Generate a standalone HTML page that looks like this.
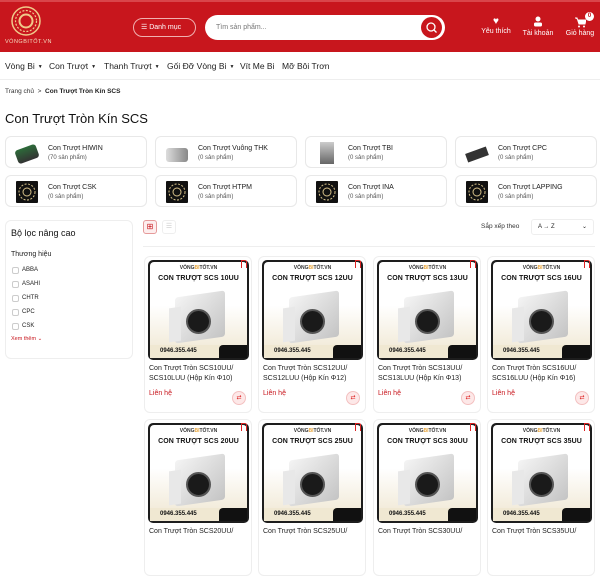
<!DOCTYPE html>
<html><head><meta charset="utf-8">
<style>
*{box-sizing:border-box;margin:0;padding:0}
body{width:600px;height:535px;overflow:hidden;background:#fff;font-family:"Liberation Sans",Arial,sans-serif;color:#222;position:relative}
.a{position:absolute}
.hdr{left:0;top:0;width:600px;height:52px;background:#c8161d;border-top:2px solid #d9454a}
.ico{color:#fff;font-size:7px;text-align:center;width:44px}
.nav{top:52px;left:0;width:600px;height:28px;border-bottom:1px solid #eee;font-size:8.5px;color:#222}
.nav>span{position:absolute;top:9px;white-space:nowrap}
.tri{font-size:5px;margin-left:3px;vertical-align:1px}
.cat{border:1px solid #e8e8e8;border-radius:6px;height:32px;width:142px;background:#fff}
.cat .t{position:absolute;left:42px;top:8px;font-size:7px;color:#222}
.cat .s{position:absolute;left:42px;top:18px;font-size:6px;color:#555}
.cat .im{position:absolute;left:10px;top:5px;width:22px;height:22px}
.bim{background:#111;border-radius:1px}
.side{left:5px;top:220px;width:128px;height:139px;border:1px solid #eee;border-radius:6px}
.cb{position:absolute;left:6px;width:7px;height:7px;border:1px solid #ccc;border-radius:2px}
.cbl{position:absolute;left:16px;font-size:6px;color:#222}
.card{width:108px;height:157px;border:1px solid #eee;border-radius:6px;background:#fff}
.img{position:absolute;left:3px;top:3px;width:101px;height:100px;border-radius:5px;background:#1d1d1d;overflow:hidden}
.in{position:absolute;left:2px;top:2px;right:2px;bottom:2px;border-radius:4px;background:linear-gradient(#fff 0%,#fff 45%,#efe6d0 100%)}
.br{position:absolute;top:3px;width:100%;text-align:center;font-size:5px;font-weight:bold;color:#333}
.br b{color:#e8a53a}
.tt{position:absolute;top:13px;width:100%;text-align:center;font-size:7px;font-weight:bold;color:#111;letter-spacing:.1px}
.blk{position:absolute;left:25px;top:32px;width:50px;height:46px;background:linear-gradient(135deg,#f4f4f4,#c4c4c4);border-radius:3px;transform:skewY(-8deg)}
.blk:before{content:"";position:absolute;left:-6px;top:10px;width:12px;height:34px;background:#e8e8e8}
.bear{position:absolute;left:36px;top:47px;width:25px;height:25px;border-radius:50%;background:#1a1a1a;border:2px solid #555}
.ph{position:absolute;left:0;bottom:0;width:100%;height:13px;background:#f0e8d2}
.ph span{position:absolute;left:10px;top:3px;font-size:6px;font-weight:bold;color:#111}
.ph i{position:absolute;right:0;top:0;width:28px;height:13px;background:#111;border-radius:4px 0 0 0}
.bm{position:absolute;right:2px;top:0;width:6px;height:8px;border:1.5px solid #d22;border-bottom:none}
.nm{position:absolute;left:4px;top:107px;font-size:7px;line-height:10px;color:#222;width:100px}
.pr{position:absolute;left:4px;top:133px;font-size:7px;color:#c8161d}
.cmp{position:absolute;right:5px;top:134px;width:14px;height:14px;border-radius:50%;background:#fde8e8;border:1px solid #f3c0c0;color:#d22;font-size:6px;text-align:center;line-height:12px}
</style></head><body>
<div class="a hdr">
  <svg class="a" style="left:11px;top:4px" width="30" height="31" viewBox="0 0 30 31"><circle cx="15" cy="15" r="14" fill="none" stroke="#f0c98a" stroke-width="1.5"/><circle cx="15" cy="15" r="10.5" fill="none" stroke="#f0c98a" stroke-width="1.2" stroke-dasharray="2 1.5"/><circle cx="15" cy="15" r="6.5" fill="none" stroke="#f0c98a" stroke-width="2"/></svg>
  <div class="a" style="left:5px;top:37px;font-size:5.5px;color:#f5dcc0;letter-spacing:.5px">VÒNGBITỐT.VN</div>
  <div class="a" style="left:133px;top:16px;width:63px;height:19px;border:1px solid #f0b0b0;border-radius:10px;color:#fff;font-size:7px;line-height:17px;padding-left:7px">☰ Danh mục</div>
  <div class="a" style="left:205px;top:13px;width:240px;height:25px;background:#fff;border-radius:13px;font-size:7px;color:#777;line-height:25px;padding-left:11px">Tìm sản phẩm...</div>
  <div class="a" style="left:421px;top:15px;width:21px;height:21px;border-radius:50%;background:#c8161d"><svg width="21" height="21"><circle cx="10" cy="10" r="4" fill="none" stroke="#fff" stroke-width="1.3"/><path d="M13 13l2.5 2.5" stroke="#fff" stroke-width="1.3"/></svg></div>
  <div class="a ico" style="left:474px;top:14px"><div style="font-size:10px;line-height:12px">♥</div>Yêu thích</div>
  <div class="a ico" style="left:516px;top:14px"><svg width="10" height="12"><circle cx="5" cy="3" r="2.5" fill="#fff"/><rect x="1" y="6.5" width="8" height="4" rx="1.5" fill="#fff"/></svg><br>Tài khoản</div>
  <div class="a ico" style="left:558px;top:14px"><svg width="12" height="12"><path d="M1 2h2l2 6h6l1-4H4" fill="#fff" stroke="#fff"/><circle cx="5" cy="10.5" r="1" fill="#fff"/><circle cx="10" cy="10.5" r="1" fill="#fff"/></svg><br>Giỏ hàng</div>
  <div class="a" style="left:585px;top:10px;width:9px;height:9px;border-radius:50%;background:#fff;color:#c8161d;font-size:6px;font-weight:bold;text-align:center;line-height:9px">0</div>
</div>
<div class="a nav">
  <span style="left:5px">Vòng Bi<span class="tri">▼</span></span>
  <span style="left:49px">Con Trượt<span class="tri">▼</span></span>
  <span style="left:104px">Thanh Trượt<span class="tri">▼</span></span>
  <span style="left:167px">Gối Đỡ Vòng Bi<span class="tri">▼</span></span>
  <span style="left:240px">Vít Me Bi</span>
  <span style="left:282px">Mỡ Bôi Trơn</span>
</div>
<div class="a" style="left:5px;top:88px;font-size:6.5px;color:#333">Trang chủ &nbsp;&gt;&nbsp; <b style="color:#222">Con Trượt Tròn Kín SCS</b></div>
<div class="a" style="left:5px;top:111px;font-size:13px;color:#111">Con Trượt Tròn Kín SCS</div>

<div class="a cat" style="left:5px;top:136px"><div class="im" style="background:linear-gradient(#2d6b3a,#333);border-radius:3px;transform:rotate(-20deg);height:14px;top:10px"></div><div class="t">Con Trượt HIWIN</div><div class="s">(70 sản phẩm)</div></div>
<div class="a cat" style="left:155px;top:136px"><div class="im" style="background:linear-gradient(90deg,#ddd,#888);border-radius:3px;height:14px;top:11px"></div><div class="t">Con Trượt Vuông THK</div><div class="s">(0 sản phẩm)</div></div>
<div class="a cat" style="left:305px;top:136px"><div class="im" style="background:linear-gradient(#ccc,#666);width:14px;left:14px"></div><div class="t">Con Trượt TBI</div><div class="s">(0 sản phẩm)</div></div>
<div class="a cat" style="left:455px;top:136px"><div class="im" style="background:#333;height:9px;top:13px;transform:rotate(-20deg)"></div><div class="t">Con Trượt CPC</div><div class="s">(0 sản phẩm)</div></div>
<div class="a cat" style="left:5px;top:175px"><div class="im bim"><svg width="22" height="22"><circle cx="11" cy="11" r="8" fill="none" stroke="#d8c28a" stroke-dasharray="2 1.5"/><circle cx="11" cy="11" r="4" fill="none" stroke="#d8c28a"/></svg></div><div class="t">Con Trượt CSK</div><div class="s">(0 sản phẩm)</div></div>
<div class="a cat" style="left:155px;top:175px"><div class="im bim"><svg width="22" height="22"><circle cx="11" cy="11" r="8" fill="none" stroke="#d8c28a" stroke-dasharray="2 1.5"/><circle cx="11" cy="11" r="4" fill="none" stroke="#d8c28a"/></svg></div><div class="t">Con Trượt HTPM</div><div class="s">(0 sản phẩm)</div></div>
<div class="a cat" style="left:305px;top:175px"><div class="im bim"><svg width="22" height="22"><circle cx="11" cy="11" r="8" fill="none" stroke="#d8c28a" stroke-dasharray="2 1.5"/><circle cx="11" cy="11" r="4" fill="none" stroke="#d8c28a"/></svg></div><div class="t">Con Trượt INA</div><div class="s">(0 sản phẩm)</div></div>
<div class="a cat" style="left:455px;top:175px"><div class="im bim"><svg width="22" height="22"><circle cx="11" cy="11" r="8" fill="none" stroke="#d8c28a" stroke-dasharray="2 1.5"/><circle cx="11" cy="11" r="4" fill="none" stroke="#d8c28a"/></svg></div><div class="t">Con Trượt LAPPING</div><div class="s">(0 sản phẩm)</div></div>

<div class="a side">
  <div class="a" style="left:5px;top:7px;font-size:9px;color:#111">Bộ lọc nâng cao</div>
  <div class="a" style="left:5px;top:30px;font-size:7px;color:#222">Thương hiệu</div>
  <div class="cb" style="top:46px"></div><div class="cbl" style="top:46px">ABBA</div>
  <div class="cb" style="top:60px"></div><div class="cbl" style="top:60px">ASAHI</div>
  <div class="cb" style="top:74px"></div><div class="cbl" style="top:74px">CHTR</div>
  <div class="cb" style="top:88px"></div><div class="cbl" style="top:88px">CPC</div>
  <div class="cb" style="top:102px"></div><div class="cbl" style="top:102px">CSK</div>
  <div class="a" style="left:5px;top:115px;font-size:5.5px;color:#c8161d">Xem thêm ⌄</div>
</div>

<div class="a" style="left:143px;top:220px;width:14px;height:14px;border:1px solid #e59a9a;border-radius:3px;background:#fdeeee;color:#c8161d;font-size:8px;text-align:center;line-height:12px">⊞</div>
<div class="a" style="left:162px;top:220px;width:14px;height:14px;border:1px solid #eee;border-radius:3px;color:#ccc;font-size:7px;text-align:center;line-height:12px">☰</div>
<div class="a" style="left:481px;top:223px;font-size:6.5px;color:#333">Sắp xếp theo</div>
<div class="a" style="left:531px;top:219px;width:63px;height:16px;border:1px solid #eee;border-radius:3px;font-size:6px;line-height:14px;padding-left:6px">A → Z<span style="position:absolute;right:6px">⌄</span></div>
<div class="a" style="left:143px;top:246px;width:452px;height:1px;background:#eee"></div>

<!-- row 1 -->
<div class="a card" style="left:144px;top:256px"><div class="img"><div class="in"><div class="br">VÒNG<b>BI</b>TỐT.VN</div><div class="tt">CON TRƯỢT SCS 10UU</div><div class="blk"></div><div class="bear"></div><div class="ph"><span>0946.355.445</span><i></i></div></div><div class="bm"></div></div><div class="nm">Con Trượt Tròn SCS10UU/ SCS10LUU (Hộp Kín Φ10)</div><div class="pr">Liên hệ</div><div class="cmp">⇄</div></div>
<div class="a card" style="left:258px;top:256px"><div class="img"><div class="in"><div class="br">VÒNG<b>BI</b>TỐT.VN</div><div class="tt">CON TRƯỢT SCS 12UU</div><div class="blk"></div><div class="bear"></div><div class="ph"><span>0946.355.445</span><i></i></div></div><div class="bm"></div></div><div class="nm">Con Trượt Tròn SCS12UU/ SCS12LUU (Hộp Kín Φ12)</div><div class="pr">Liên hệ</div><div class="cmp">⇄</div></div>
<div class="a card" style="left:373px;top:256px"><div class="img"><div class="in"><div class="br">VÒNG<b>BI</b>TỐT.VN</div><div class="tt">CON TRƯỢT SCS 13UU</div><div class="blk"></div><div class="bear"></div><div class="ph"><span>0946.355.445</span><i></i></div></div><div class="bm"></div></div><div class="nm">Con Trượt Tròn SCS13UU/ SCS13LUU (Hộp Kín Φ13)</div><div class="pr">Liên hệ</div><div class="cmp">⇄</div></div>
<div class="a card" style="left:487px;top:256px"><div class="img"><div class="in"><div class="br">VÒNG<b>BI</b>TỐT.VN</div><div class="tt">CON TRƯỢT SCS 16UU</div><div class="blk"></div><div class="bear"></div><div class="ph"><span>0946.355.445</span><i></i></div></div><div class="bm"></div></div><div class="nm">Con Trượt Tròn SCS16UU/ SCS16LUU (Hộp Kín Φ16)</div><div class="pr">Liên hệ</div><div class="cmp">⇄</div></div>
<!-- row 2 -->
<div class="a card" style="left:144px;top:419px"><div class="img"><div class="in"><div class="br">VÒNG<b>BI</b>TỐT.VN</div><div class="tt">CON TRƯỢT SCS 20UU</div><div class="blk"></div><div class="bear"></div><div class="ph"><span>0946.355.445</span><i></i></div></div><div class="bm"></div></div><div class="nm">Con Trượt Tròn SCS20UU/</div></div>
<div class="a card" style="left:258px;top:419px"><div class="img"><div class="in"><div class="br">VÒNG<b>BI</b>TỐT.VN</div><div class="tt">CON TRƯỢT SCS 25UU</div><div class="blk"></div><div class="bear"></div><div class="ph"><span>0946.355.445</span><i></i></div></div><div class="bm"></div></div><div class="nm">Con Trượt Tròn SCS25UU/</div></div>
<div class="a card" style="left:373px;top:419px"><div class="img"><div class="in"><div class="br">VÒNG<b>BI</b>TỐT.VN</div><div class="tt">CON TRƯỢT SCS 30UU</div><div class="blk"></div><div class="bear"></div><div class="ph"><span>0946.355.445</span><i></i></div></div><div class="bm"></div></div><div class="nm">Con Trượt Tròn SCS30UU/</div></div>
<div class="a card" style="left:487px;top:419px"><div class="img"><div class="in"><div class="br">VÒNG<b>BI</b>TỐT.VN</div><div class="tt">CON TRƯỢT SCS 35UU</div><div class="blk"></div><div class="bear"></div><div class="ph"><span>0946.355.445</span><i></i></div></div><div class="bm"></div></div><div class="nm">Con Trượt Tròn SCS35UU/</div></div>
</body></html>
